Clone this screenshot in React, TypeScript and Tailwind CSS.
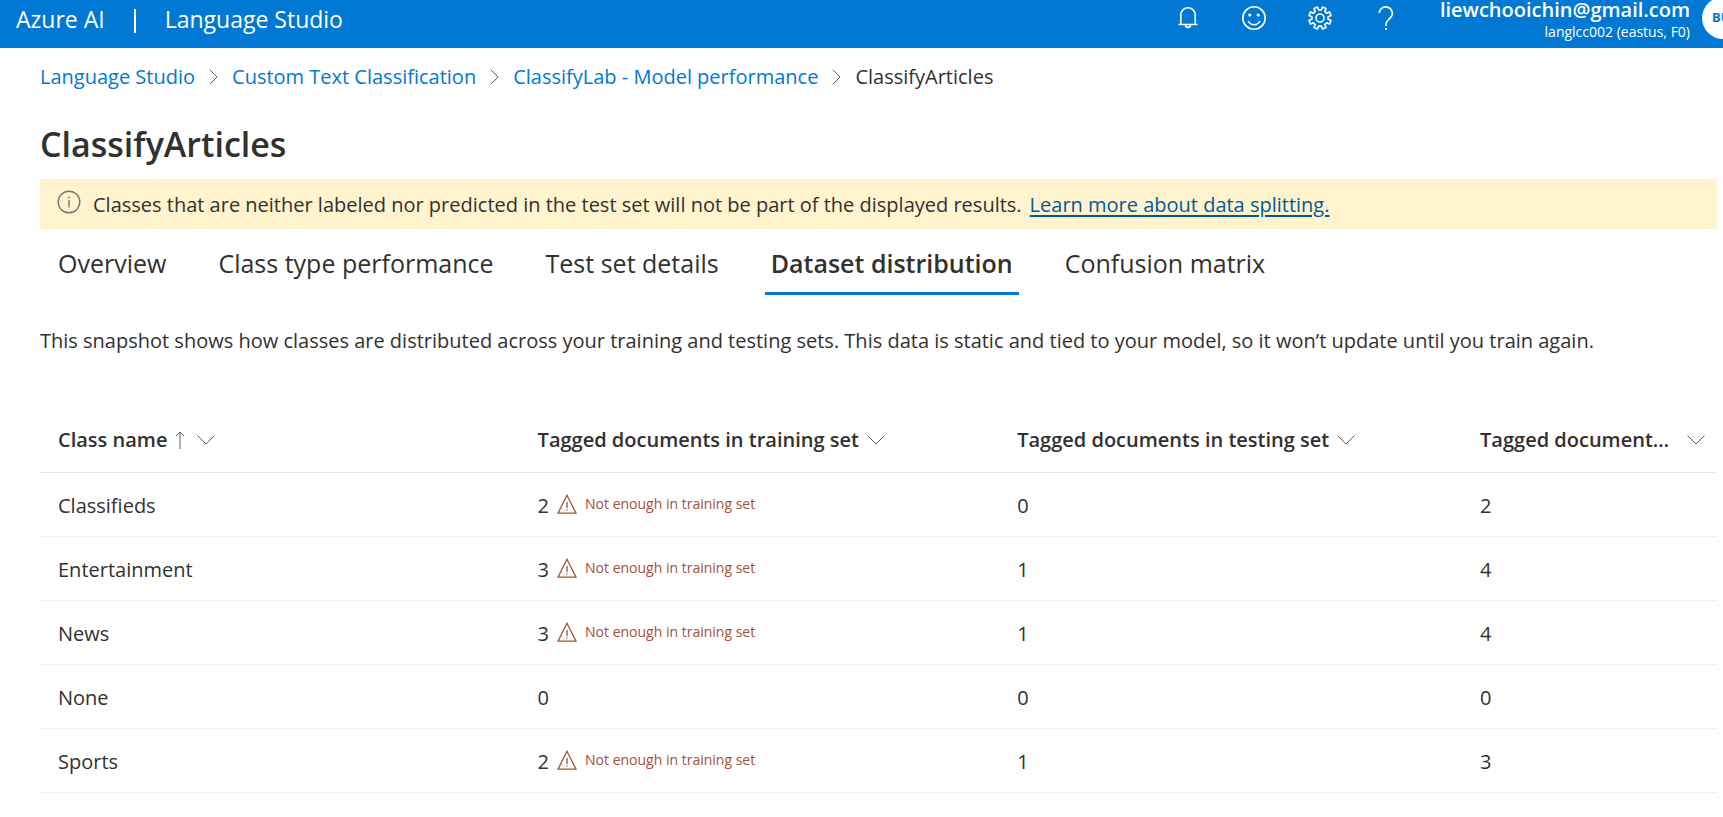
import React from "react";

const ICON = "fill-none stroke-current";

function Bell() {
  return (
    <svg className={ICON} width="24" height="24" viewBox="0 0 24 24" strokeWidth="1.6">
      <path d="M2.500 18.500h19M4.800 18.500V9a7.200 7.200 0 0 1 14.400 0v9.500M9.600 19a2.400 2.400 0 0 0 4.800 0" />
    </svg>
  );
}

function Smile() {
  return (
    <svg className={ICON} width="24" height="24" viewBox="0 0 24 24" strokeWidth="1.6">
      <circle cx="12" cy="12" r="11.2" />
      <path d="M6.200 15a6.400 6.400 0 0 0 11.600 0" />
      <circle cx="7.800" cy="9" r="1.600" className="fill-current stroke-none" />
      <circle cx="16.200" cy="9" r="1.600" className="fill-current stroke-none" />
    </svg>
  );
}

function gearPath() {
  const pts: string[] = [];
  for (let i = 0; i < 8; i++) {
    const steps: [number, number][] = [
      [-13, 8.2],
      [-10, 11.3],
      [10, 11.3],
      [13, 8.2],
    ];
    for (const [a, r] of steps) {
      const t = ((i * 45 + 22.5 + a) * Math.PI) / 180;
      pts.push(`${(12 + r * Math.cos(t)).toFixed(2)} ${(12 + r * Math.sin(t)).toFixed(2)}`);
    }
  }
  return `M${pts.join("L")}Z`;
}

function Gear() {
  return (
    <svg className={ICON} width="24" height="24" viewBox="0 0 24 24" strokeWidth="1.6" strokeLinejoin="round">
      <path d={gearPath()} />
      <circle cx="12" cy="12" r="4" />
    </svg>
  );
}

function Question() {
  return (
    <svg className={ICON} width="24" height="24" viewBox="0 0 24 24" strokeWidth="1.6">
      <path d="M5.300 7a6.500 6.300 0 1 1 11.200 4.600C14.200 14 12 15.200 12 18.500v1.500" />
      <path d="M12 22v2" strokeWidth="2" />
    </svg>
  );
}

function Info() {
  return (
    <svg className="shrink-0 fill-none stroke-[#797775]" width="24" height="24" viewBox="0 0 24 24" strokeWidth="1.4">
      <circle cx="12" cy="12" r="10.8" />
      <path d="M12 10v7.500M12 6.500v1.800" />
    </svg>
  );
}

function Warning() {
  return (
    <svg className="shrink-0 fill-none stroke-[#a4513a]" width="20" height="20" viewBox="0 0 20 20" strokeWidth="1.3">
      <path d="M10 1.200 19 19.200H1Z" />
      <path d="M10 8v6M10 15.200v1.400" />
    </svg>
  );
}

function ChevronDown() {
  return (
    <svg className="shrink-0 fill-none stroke-[#605e5c]" width="18" height="10" viewBox="0 0 18 10">
      <path d="M.5.5 9 9 17.500.5" />
    </svg>
  );
}

function ChevronRight() {
  return (
    <svg className="shrink-0 fill-none stroke-[#605e5c]" width="9" height="16" viewBox="0 0 9 16">
      <path d="M.8.8 8 8 .8 15.200" />
    </svg>
  );
}

function ArrowUp() {
  return (
    <svg className="mr-1 shrink-0 fill-none stroke-[#605e5c]" width="10" height="18" viewBox="0 0 10 18">
      <path d="M5 18V1M.8 5.200 5 1l4.200 4.200" />
    </svg>
  );
}

const crumbs = ["Language Studio", "Custom Text Classification", "ClassifyLab - Model performance"];
const tabs = ["Overview", "Class type performance", "Test set details", "Dataset distribution", "Confusion matrix"];
const rows = [
  { name: "Classifieds", training: 2, testing: 0, total: 2 },
  { name: "Entertainment", training: 3, testing: 1, total: 4 },
  { name: "News", training: 3, testing: 1, total: 4 },
  { name: "None", training: 0, testing: 0, total: 0 },
  { name: "Sports", training: 2, testing: 1, total: 3 },
];
const tools = [
  { label: "Notifications", icon: <Bell /> },
  { label: "Feedback", icon: <Smile /> },
  { label: "Settings", icon: <Gear /> },
  { label: "Help", icon: <Question /> },
];

export default function App() {
  return (
    <div className="min-h-screen overflow-x-hidden bg-white font-['Open_Sans','Noto_Sans',sans-serif] text-[20px] text-[#323130]">
      <header className="flex h-12 justify-between overflow-hidden bg-[#0078d4] pl-4 text-white">
        <div className="flex h-[38px] items-center gap-[29px] text-[23px]">
          <span>Azure AI</span>
          <span className="mt-1 h-6 w-0.5 bg-white" />
          <span>Language Studio</span>
        </div>
        <div className="flex">
          <div className="flex h-9 items-center gap-[42px]">
            {tools.map((t) => (
              <button key={t.label} type="button" aria-label={t.label}>
                {t.icon}
              </button>
            ))}
          </div>
          <div className="ml-[42px] text-right">
            <p className="h-5 text-[20px] leading-5 font-semibold">liewchooichin@gmail.com</p>
            <p className="text-[14px] leading-6">langlcc002 (eastus, F0)</p>
          </div>
          <button
            type="button"
            className="-mt-[3px] -mr-[21px] ml-3 flex size-[42px] items-center rounded-full bg-white pl-2.5 text-[13px] font-bold text-[#0078d4]"
          >
            BU
          </button>
        </div>
      </header>

      <main className="pr-1.5 pl-10">
        <nav aria-label="Breadcrumb" className="flex h-[58px] items-center gap-3.5">
          {crumbs.map((c) => (
            <React.Fragment key={c}>
              <a href="#" className="text-[#0078d4]">
                {c}
              </a>
              <ChevronRight />
            </React.Fragment>
          ))}
          <span>ClassifyArticles</span>
        </nav>

        <h1 className="flex h-[73px] items-center pt-1 text-[34px] font-semibold">ClassifyArticles</h1>

        <div className="flex h-[50px] items-center gap-3 bg-[#fff4ce] px-[17px]">
          <span className="pb-1">
            <Info />
          </span>
          <p className="pt-0.5">
            Classes that are neither labeled nor predicted in the test set will not be part of the displayed results.
            <a href="#" className="ml-2 text-[#005a9e] underline decoration-2 underline-offset-3">
              Learn more about data splitting.
            </a>
          </p>
        </div>

        <div role="tablist" className="flex h-[66px] gap-10 pl-3">
          {tabs.map((t) => {
            const on = t === "Dataset distribution";
            return (
              <button
                key={t}
                type="button"
                role="tab"
                aria-selected={on}
                className={
                  on
                    ? "border-b-[3px] border-[#0078d4] px-1.5 pt-1.5 text-[25px] font-semibold"
                    : "border-b-[3px] border-transparent px-1.5 pt-1.5 text-[25px]"
                }
              >
                {t}
              </button>
            );
          })}
        </div>

        <p className="pt-8 leading-7">
          This snapshot shows how classes are distributed across your training and testing sets. This data is static and
          tied to your model, so it won’t update until you train again.
        </p>

        <table className="mt-[53px] w-full table-fixed border-collapse text-left">
          <colgroup>
            <col className="w-[28.6%]" />
            <col className="w-[28.6%]" />
            <col className="w-[27.6%]" />
            <col />
          </colgroup>
          <thead>
            <tr className="h-16 border-b border-[#e8e6e4]">
              <th className="px-[18px] font-semibold">
                <span className="flex items-center gap-2">
                  Class name
                  <ArrowUp />
                  <ChevronDown />
                </span>
              </th>
              <th className="px-[18px] font-semibold">
                <span className="flex items-center gap-2">
                  Tagged documents in training set
                  <ChevronDown />
                </span>
              </th>
              <th className="px-[18px] font-semibold">
                <span className="flex items-center gap-2">
                  Tagged documents in testing set
                  <ChevronDown />
                </span>
              </th>
              <th className="pr-3 pl-[18px] font-semibold">
                <span className="flex items-center justify-between gap-4">
                  <span className="truncate">Tagged documents in total</span>
                  <ChevronDown />
                </span>
              </th>
            </tr>
          </thead>
          <tbody>
            {rows.map((r) => (
              <tr key={r.name} className="h-16 border-b border-[#f0efee]">
                <td className="px-[18px] pt-[3px]">{r.name}</td>
                <td className="px-[18px] pt-[3px]">
                  <span className="flex items-center gap-2">
                    {r.training}
                    {r.training > 0 && (
                      <span className="flex items-center gap-2 pb-1 text-[14px] text-[#a4513a]">
                        <Warning />
                        Not enough in training set
                      </span>
                    )}
                  </span>
                </td>
                <td className="px-[18px] pt-[3px]">{r.testing}</td>
                <td className="px-[18px] pt-[3px]">{r.total}</td>
              </tr>
            ))}
          </tbody>
        </table>
      </main>
    </div>
  );
}
